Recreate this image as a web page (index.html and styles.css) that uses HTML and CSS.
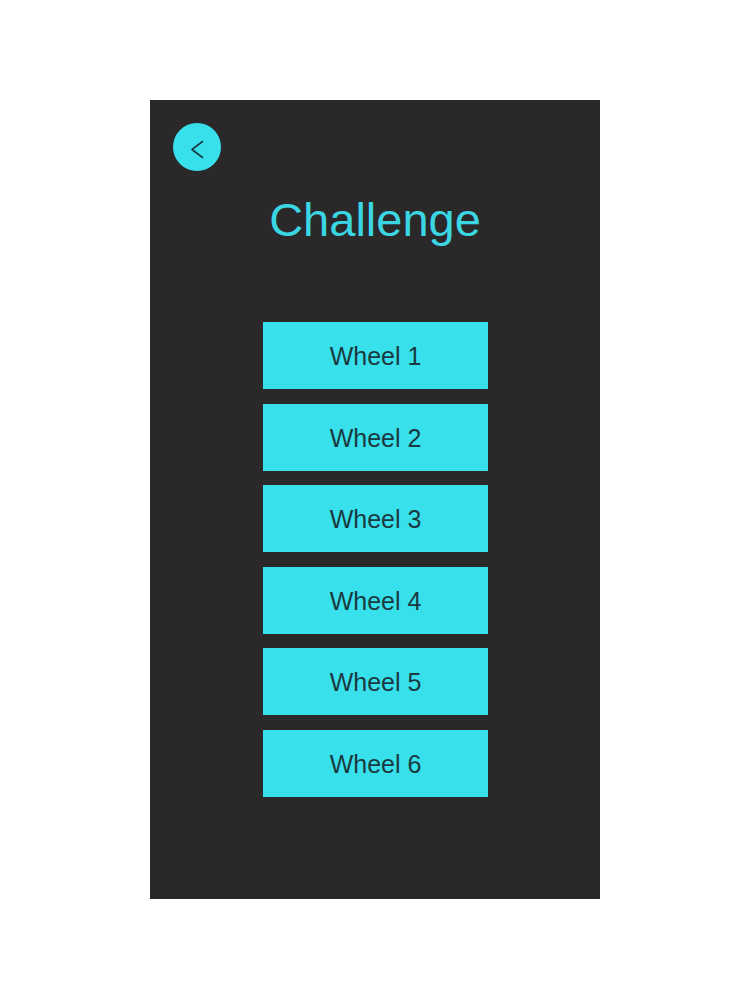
FILE: index.html
```html
<!DOCTYPE html>
<html lang="en">
<head>
<meta charset="utf-8">
<title>Challenge</title>
<link rel="stylesheet" href="styles.css">
</head>
<body>
<div class="screen">
  <div class="back" aria-label="Back">
    <svg width="48" height="48" viewBox="0 0 48 48">
      <circle cx="24" cy="24" r="24" fill="#38e0ec"/>
      <path d="M29.5 18.5 L19 26.5 L29.5 34.5" fill="none" stroke="#1b3d42" stroke-width="1.6" stroke-linecap="round" stroke-linejoin="round"/>
    </svg>
  </div>
  <h1 class="title">Challenge</h1>
  <div class="list">
    <div class="wheel">Wheel 1</div>
    <div class="wheel">Wheel 2</div>
    <div class="wheel">Wheel 3</div>
    <div class="wheel">Wheel 4</div>
    <div class="wheel">Wheel 5</div>
    <div class="wheel">Wheel 6</div>
  </div>
</div>
</body>
</html>
```
FILE: styles.css
```css
html, body {
  margin: 0;
  padding: 0;
  background: #ffffff;
}
body {
  font-family: "Liberation Sans", Arial, sans-serif;
}
.screen {
  width: 450px;
  height: 799px;
  margin: 100px 0 0 150px;
  background: #2a2829;
  display: flex;
  flex-direction: column;
  overflow: hidden;
}
.back {
  width: 48px;
  height: 48px;
  margin: 23px 0 0 23px;
}
.back svg {
  display: block;
}
.title {
  margin: 22.4px 0 0 0;
  font-size: 47px;
  line-height: 54px;
  font-weight: normal;
  color: #3ad6e3;
  text-align: center;
}
.list {
  margin-top: 74.6px;
  display: flex;
  flex-direction: column;
  align-items: center;
  gap: 14.6px;
}
.wheel {
  width: 225px;
  height: 67px;
  margin-left: 1px;
  background: #38e0ec;
  color: #1b3a40;
  font-size: 25px;
  line-height: 67px;
  padding-top: 1px;
  box-sizing: border-box;
  text-align: center;
}
```
